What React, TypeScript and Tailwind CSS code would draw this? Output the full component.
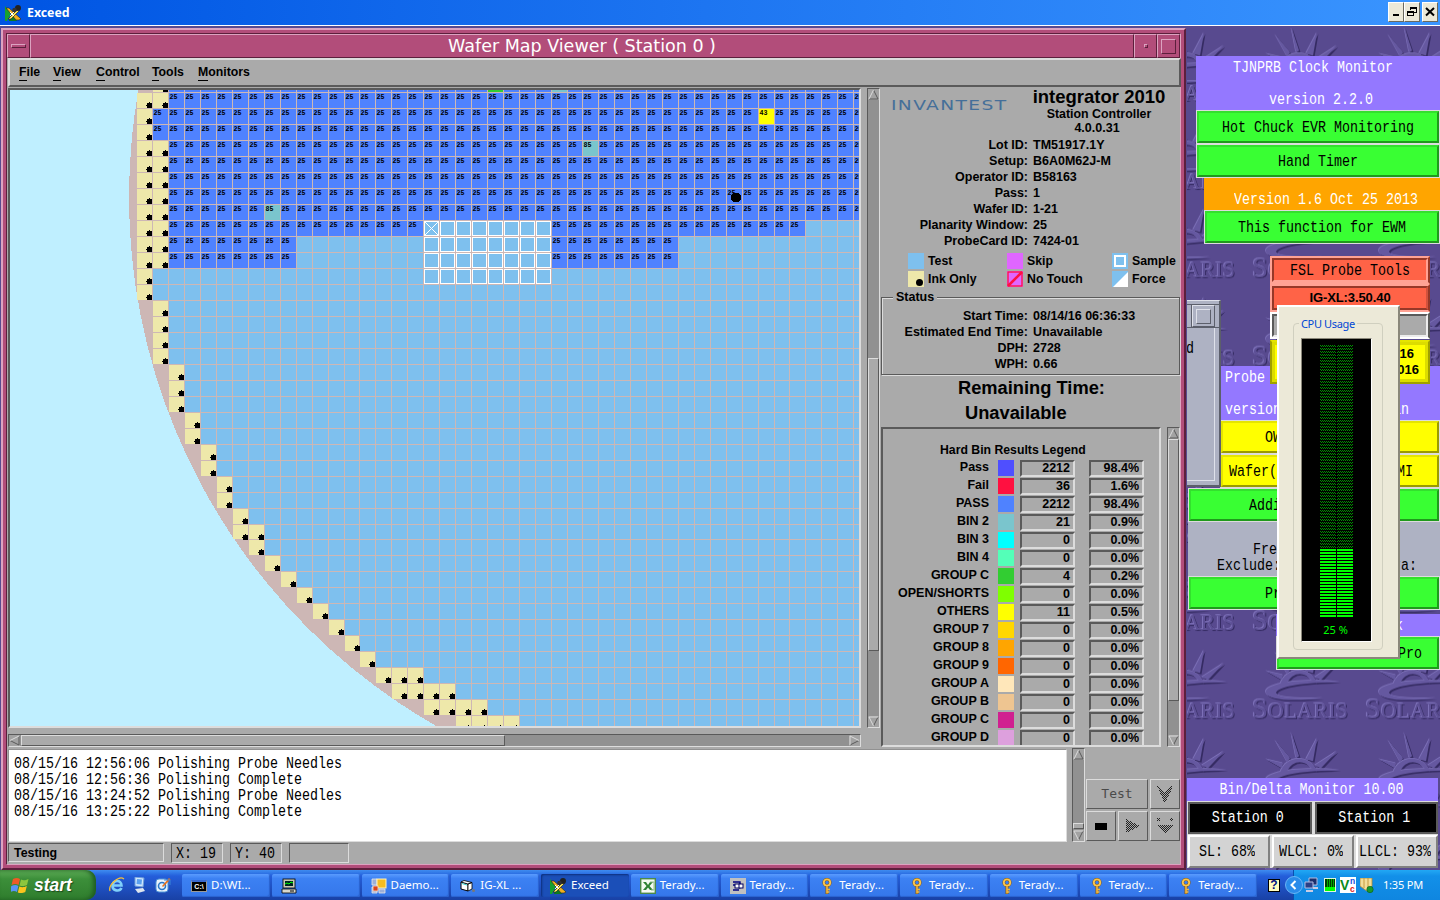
import React from "react";

const MONO =
  "[font-family:'Liberation_Mono',monospace] text-[13.33px] leading-4 whitespace-pre inline-block scale-y-[1.25]";
const BOLD = "[font-family:'Liberation_Sans',Arial,sans-serif] font-bold whitespace-pre";
const TAHOMA = "[font-family:'Noto_Sans',Tahoma,sans-serif] whitespace-pre";
const SUNK = "border-t-[#5a5a5a] border-l-[#5a5a5a] border-r-[#dcdcdc] border-b-[#dcdcdc]";
const RAISED = "border-t-[#dcdcdc] border-l-[#dcdcdc] border-r-[#5a5a5a] border-b-[#5a5a5a]";

/* ---------- Wafer map ---------- */

const colX = (i: number) => 152 + 16 * i - (i >= 13 ? 1 : 0) - (i >= 27 ? 1 : 0) - (i >= 40 ? 1 : 0);
const rowY = (j: number) => 92 + 16 * j - (j >= 28 ? 1 : 0);

const INK: Record<number, [number, number]> = {
  [-1]: [0, 0], 0: [-1, 0], 1: [-1, -1], 2: [-1, -1], 3: [-1, 0], 4: [-1, 0], 5: [-1, 0], 6: [-1, 0],
  7: [-1, 0], 8: [-1, 0], 9: [-1, 0], 10: [-1, 0], 11: [-1, -1], 12: [-1, -1], 13: [0, 0], 14: [0, 0],
  15: [0, 0], 16: [0, 0], 17: [1, 1], 18: [1, 1], 19: [1, 1], 20: [2, 2], 21: [2, 2], 22: [3, 3],
  23: [3, 3], 24: [4, 4], 25: [4, 4], 26: [5, 5], 27: [5, 6], 28: [6, 6], 29: [7, 7], 30: [8, 8],
  31: [9, 9], 32: [10, 10], 33: [11, 11], 34: [12, 12], 35: [13, 13], 36: [14, 16], 37: [15, 18],
  38: [17, 20], 39: [19, 22],
};

const SPECIAL: Record<string, [string, string]> = {
  "-1,21": ["#32cd32", ""],
  "-1,25": ["#7ac5cd", ""],
  "1,38": ["#ffff00", "43"],
  "3,27": ["#7ac5cd", "85"],
  "7,7": ["#7ac5cd", "85"],
};

const isTested = (j: number, i: number) => {
  if (j <= 7) return true;
  if (j === 8) return i <= 16 || (i >= 25 && i <= 40);
  if (j <= 10) return i <= 8 || (i >= 25 && i <= 32);
  return false;
};

function WaferMap() {
  const cells: React.ReactNode[] = [];
  for (let j = -1; j <= 39; j++) {
    const [a, b] = INK[j];
    for (let i = a; i <= 44; i++) {
      const x = colX(i);
      const y = rowY(j);
      const w = colX(i + 1) - x - 1;
      const h = rowY(j + 1) - y - 1;
      const key = `${j},${i}`;
      if (i <= b) {
        cells.push(
          <g key={key}>
            <rect x={x + 1} y={y + 1} width={w} height={h} fill="#eee8aa" />
            <rect x={x + 11} y={y + 11} width="5" height="5" fill="#000" />
            <rect x={x + 10} y={y + 13} width="1" height="1" fill="#000" />
            <rect x={x + 13} y={y + 10} width="1" height="1" fill="#000" />
          </g>
        );
        continue;
      }
      const tested = isTested(j, i);
      const sample = j >= 8 && j <= 11 && i >= 17 && i <= 24;
      const sp = SPECIAL[key];
      cells.push(
        <g key={key}>
          <rect x={x + 1} y={y + 1} width={w} height={h} fill={sp ? sp[0] : tested ? "#4f82ff" : "#7ec0ee"} />
          {sample && <rect x={x + 1.5} y={y + 1.5} width={w - 1} height={h - 1} fill="none" stroke="#fff" />}
          {tested && j >= 0 && (
            <text x={x + 1.6} y={y + 7.4} className="text-[7.5px] font-bold [font-family:'Liberation_Mono',monospace]" textLength="8" lengthAdjust="spacingAndGlyphs">
              {sp ? sp[1] : "25"}
            </text>
          )}
        </g>
      );
    }
  }
  return (
    <svg width="849" height="636" viewBox="10 90 849 636" shapeRendering="crispEdges" className="block bg-[#bfefff]">
      <circle cx="738" cy="197" r="609" fill="#cdb7b5" />
      {cells}
      <path d="M425 222l13 13M438 222l-13 13" stroke="#fff" />
      <circle cx="736" cy="197.5" r="5" fill="#000" />
    </svg>
  );
}

/* ---------- Motif scrollbars ---------- */

function Arrow({ dir }: { dir: "up" | "down" | "left" | "right" }) {
  const d = {
    up: ["M1 10L5.5 1", "M5.5 1L10 10H1"],
    down: ["M10 1H1L5.5 10", "M5.5 10L10 1"],
    left: ["M1 5.5L10 1", "M10 1V10L1 5.5"],
    right: ["M1 10V1L10 5.5", "M10 5.5L1 10"],
  }[dir];
  return (
    <svg width="11" height="11" viewBox="0 0 11 11" fill="none" className="shrink-0 bg-[#a2a2a2]">
      <path d={d[1]} stroke="#5a5a5a" strokeWidth="1" />
      <path d={d[0]} stroke="#dcdcdc" strokeWidth="1" />
    </svg>
  );
}

function VBar({ before, thumb, h }: { before: number; thumb: number; h: string }) {
  return (
    <div className={`flex w-[13px] shrink-0 flex-col border bg-[#919191] ${SUNK} ${h}`}>
      <Arrow dir="up" />
      <div className="shrink-0" style={{ height: before }} />
      <div className={`shrink-0 border bg-[#aaaaaa] ${RAISED}`} style={{ height: thumb }} />
      <div className="grow" />
      <Arrow dir="down" />
    </div>
  );
}

/* ---------- Info panel ---------- */

function InfoRow({ label, value }: { label: string; value: string }) {
  return (
    <div className={`flex h-4 items-center text-[12.5px] leading-4 ${BOLD}`}>
      <span className="w-[147px] text-right">{label}</span>
      <span className="ml-[5px]">{value}</span>
    </div>
  );
}

function Swatch({ kind }: { kind: string }) {
  return (
    <svg width="16" height="16" viewBox="0 0 16 16" className="shrink-0">
      <rect width="16" height="16" fill={kind === "ink" ? "#eee8aa" : kind === "skip" || kind === "notouch" ? "#e066ff" : "#7ec0ee"} />
      {kind === "ink" && <circle cx="11.5" cy="11.5" r="3.5" />}
      {kind === "notouch" && (
        <g stroke="#ff1040" fill="none">
          <rect x="1" y="1" width="14" height="14" strokeWidth="1.3" />
          <path d="M1 15L15 1" strokeWidth="2.6" />
        </g>
      )}
      {kind === "sample" && <rect x="3" y="3" width="10" height="10" fill="none" stroke="#fff" strokeWidth="2" />}
      {kind === "force" && <path d="M16 1V16H1Z" fill="#fff" />}
    </svg>
  );
}

function LegendItem({ kind, text, w }: { kind: string; text: string; w: string }) {
  return (
    <div className={`flex items-center gap-1 ${w}`}>
      <Swatch kind={kind} />
      <span className={`text-[12.3px] leading-4 ${BOLD}`}>{text}</span>
    </div>
  );
}

const BINS: [string, string, string, string][] = [
  ["Pass", "#4f4fff", "2212", "98.4%"],
  ["Fail", "#ff1040", "36", "1.6%"],
  ["PASS", "#4f82ff", "2212", "98.4%"],
  ["BIN 2", "#7ac5cd", "21", "0.9%"],
  ["BIN 3", "#00ffff", "0", "0.0%"],
  ["BIN 4", "#54ffb8", "0", "0.0%"],
  ["GROUP C", "#32cd32", "4", "0.2%"],
  ["OPEN/SHORTS", "#7fff00", "0", "0.0%"],
  ["OTHERS", "#ffff00", "11", "0.5%"],
  ["GROUP 7", "#ffd700", "0", "0.0%"],
  ["GROUP 8", "#ffa500", "0", "0.0%"],
  ["GROUP 9", "#ff6600", "0", "0.0%"],
  ["GROUP A", "#ffe7ba", "0", "0.0%"],
  ["GROUP B", "#eec591", "0", "0.0%"],
  ["GROUP C", "#d02090", "0", "0.0%"],
  ["GROUP D", "#dda0dd", "0", "0.0%"],
];

function RightPanel() {
  return (
    <div className="flex h-[660px] w-[300px] flex-col">
      <div className="flex h-[49px] shrink-0">
        <div className="w-[147px] pt-[10px] pl-[10px]">
          <div className="origin-left scale-x-[1.38] [font-family:'DejaVu_Sans',sans-serif] text-[13.5px] leading-[14px] tracking-[1px] text-[#456f99]">
            INVANTEST
          </div>
        </div>
        <div className={`flex w-[142px] flex-col items-center ${BOLD}`}>
          <div className="text-[18.5px] leading-[18px]">integrator 2010</div>
          <div className="mt-px text-[12.4px] leading-[15px]">Station Controller</div>
          <div className="-ml-1 text-[12.5px] leading-[13px]">4.0.0.31</div>
        </div>
      </div>
      <InfoRow label="Lot ID:" value="TM51917.1Y" />
      <InfoRow label="Setup:" value="B6A0M62J-M" />
      <InfoRow label="Operator ID:" value="B58163" />
      <InfoRow label="Pass:" value="1" />
      <InfoRow label="Wafer ID:" value="1-21" />
      <InfoRow label="Planarity Window:" value="25" />
      <InfoRow label="ProbeCard ID:" value="7424-01" />
      <div className="mt-1 ml-[27px] flex h-4 shrink-0">
        <LegendItem kind="test" text="Test" w="w-[99px]" />
        <LegendItem kind="skip" text="Skip" w="w-[105px]" />
        <LegendItem kind="sample" text="Sample" w="" />
      </div>
      <div className="mt-[2px] ml-[27px] flex h-4 shrink-0">
        <LegendItem kind="ink" text="Ink Only" w="w-[99px]" />
        <LegendItem kind="notouch" text="No Touch" w="w-[105px]" />
        <LegendItem kind="force" text="Force" w="" />
      </div>
      <div className="relative mt-[10px] flex h-[78px] w-[299px] shrink-0 flex-col border border-[#5a5a5a] pt-[10px] shadow-[1px_1px_0_#dcdcdc,inset_1px_1px_0_#dcdcdc]">
        <span className={`absolute -top-[8px] left-[11px] bg-[#aaaaaa] px-[3px] text-[12.5px] leading-[15px] ${BOLD}`}>Status</span>
        <div className="-ml-px">
          <InfoRow label="Start Time:" value="08/14/16 06:36:33" />
          <InfoRow label="Estimated End Time:" value="Unavailable" />
          <InfoRow label="DPH:" value="2728" />
          <InfoRow label="WPH:" value="0.66" />
        </div>
      </div>
      <div className={`shrink-0 pl-[77px] text-[18.3px] leading-[25px] ${BOLD}`}>Remaining Time:</div>
      <div className={`shrink-0 pl-[84px] text-[18.3px] leading-[25px] ${BOLD}`}>Unavailable</div>
      <div className="mt-[2px] flex h-[320px] shrink-0">
        <div className={`mr-[6px] w-[280px] overflow-hidden border-2 ${SUNK}`}>
          <div className={`mt-[12px] pl-[57px] text-[12.25px] leading-[18px] ${BOLD}`}>Hard Bin Results Legend</div>
          {BINS.map(([name, color, n, pct], k) => (
            <div key={k} className={`flex h-[18px] items-center text-[12.5px] leading-[15px] ${BOLD}`}>
              <span className="w-[106px] pb-px text-right">{name}</span>
              <span className="ml-[9px] h-4 w-4" style={{ background: color }} />
              <span className={`ml-[6px] h-[17px] w-[55px] border-2 pr-[3px] text-right leading-[12px] ${SUNK}`}>{n}</span>
              <span className={`ml-[14px] h-[17px] w-[55px] border-2 pr-[3px] text-right leading-[12px] ${SUNK}`}>{pct}</span>
            </div>
          ))}
        </div>
        <VBar before={0} thumb={262} h="h-[320px]" />
      </div>
    </div>
  );
}

/* ---------- Main window ---------- */

function GreyButton({ w, children }: { w: string; children: React.ReactNode }) {
  return <div className={`flex h-[30px] items-center justify-center border ${RAISED} ${w}`}>{children}</div>;
}

function Stipple({ d }: { d: string }) {
  return (
    <svg width="16" height="16" viewBox="0 0 16 16" shapeRendering="crispEdges">
      <defs>
        <pattern id="stip" width="2" height="2" patternUnits="userSpaceOnUse">
          <path d="M0 0h1v1h-1zM1 1h1v1h-1z" fill="#222" />
        </pattern>
      </defs>
      <path d={d} fill="url(#stip)" />
    </svg>
  );
}

const MENUS = [
  ["F", "ile", "w-[34px]"],
  ["V", "iew", "w-[43px]"],
  ["C", "ontrol", "w-[56px]"],
  ["T", "ools", "w-[46px]"],
  ["M", "onitors", ""],
];

function MainWindow() {
  return (
    <div className="absolute top-0 left-px flex h-[842px] w-[1185px] flex-col border-2 border-t-[#dca3c0] border-r-[#5c1f3c] border-b-[#5c1f3c] border-l-[#dca3c0] bg-[#b24d7a] p-[3px]">
      <div className="flex grow flex-col border border-t-[#5c1f3c] border-r-[#dca3c0] border-b-[#dca3c0] border-l-[#5c1f3c]">
        <div className="flex h-[24px] shrink-0">
          <div className="flex w-[23px] items-center justify-center border border-t-[#dca3c0] border-r-[#5c1f3c] border-b-[#5c1f3c] border-l-[#dca3c0]">
            <div className="h-[4px] w-[15px] border border-t-[#dca3c0] border-r-[#5c1f3c] border-b-[#5c1f3c] border-l-[#dca3c0]" />
          </div>
          <div className="flex grow items-center justify-center border border-t-[#dca3c0] border-r-[#5c1f3c] border-b-[#5c1f3c] border-l-[#dca3c0] text-[17.5px] leading-5 whitespace-pre text-white [font-family:'DejaVu_Sans',sans-serif]">
            Wafer Map Viewer ( Station 0 )
          </div>
          <div className="flex w-[23px] items-center justify-center border border-t-[#dca3c0] border-r-[#5c1f3c] border-b-[#5c1f3c] border-l-[#dca3c0]">
            <div className="h-1 w-1 border border-t-[#dca3c0] border-r-[#5c1f3c] border-b-[#5c1f3c] border-l-[#dca3c0]" />
          </div>
          <div className="flex w-[23px] items-center justify-center border border-t-[#dca3c0] border-r-[#5c1f3c] border-b-[#5c1f3c] border-l-[#dca3c0]">
            <div className="h-[15px] w-[15px] border border-t-[#dca3c0] border-r-[#5c1f3c] border-b-[#5c1f3c] border-l-[#dca3c0]" />
          </div>
        </div>
        <div className="flex grow flex-col bg-[#aaaaaa] pl-px">
          <div className={`flex h-[29px] w-[1173px] shrink-0 items-center border-2 pb-[2px] pl-[9px] text-[12.3px] leading-4 ${RAISED} ${BOLD}`}>
            {MENUS.map(([a, b, w]) => (
              <span key={a} className={w}>
                <span className="border-b border-black pb-px">{a}</span>
                {b}
              </span>
            ))}
          </div>
          <div className="flex h-[661px] shrink-0 pt-px">
            <div className="flex w-[873px] shrink-0 flex-col">
              <div className="flex h-[640px]">
                <div className={`h-[640px] w-[853px] shrink-0 border-2 ${SUNK}`}>
                  <WaferMap />
                </div>
                <div className="w-[6px]" />
                <VBar before={258} thumb={293} h="h-[640px]" />
              </div>
              <div className={`mt-[6px] flex h-[13px] w-[853px] border bg-[#919191] ${SUNK}`}>
                <Arrow dir="left" />
                <div className={`ml-px h-[11px] w-[484px] border bg-[#aaaaaa] ${RAISED}`} />
                <div className="grow" />
                <Arrow dir="right" />
              </div>
            </div>
            <RightPanel />
          </div>
          <div className="flex h-[94px] shrink-0">
            <div className="mt-px h-[93px] w-[1059px] border border-t-[#919191] border-r-[#dcdcdc] border-b-[#dcdcdc] border-l-[#919191] bg-white pt-[6px] pl-[5px]">
              {[
                "08/15/16 12:56:06 Polishing Probe Needles",
                "08/15/16 12:56:36 Polishing Complete",
                "08/15/16 13:24:52 Polishing Probe Needles",
                "08/15/16 13:25:22 Polishing Complete",
              ].map((t, k) => (
                <Line key={k} text={t} className="" />
              ))}
            </div>
            <div className="w-[5px]" />
            <VBar before={63} thumb={6} h="h-[94px]" />
            <div className="ml-px flex flex-col gap-[2px] pt-[31px]">
              <div className="flex gap-[2px]">
                <GreyButton w="w-[62px]">
                  <span className="text-[13px] leading-4 text-[#4a4a4a] [font-family:'DejaVu_Sans_Mono',monospace]">Test</span>
                </GreyButton>
                <GreyButton w="w-[30px]">
                  <Stipple d="M0 0h2l3 4 3 2 3-2 3-4h2l-4 9-3 7h-2l-3-7z" />
                </GreyButton>
              </div>
              <div className="flex gap-[2px]">
                <GreyButton w="w-[30px]">
                  <div className="h-[7px] w-3 bg-black" />
                </GreyButton>
                <GreyButton w="w-[30px]">
                  <Stipple d="M1 1l14 7L1 15z" />
                </GreyButton>
                <GreyButton w="w-[30px]">
                  <Stipple d="M0 0h3v3H0zM13 0h3v3h-3zM1 7h15L8 16z" />
                </GreyButton>
              </div>
            </div>
          </div>
          <div className="flex h-[22px] shrink-0 items-start pt-px">
            <div className={`mr-[7px] h-[19px] w-[156px] border pl-[5px] text-[12.4px] leading-[18px] ${SUNK} ${BOLD}`}>Testing</div>
            <div className={`mr-[7px] flex h-[20px] w-[52px] items-center border pt-px pl-1 ${SUNK}`}>
              <span className={MONO}>X: 19</span>
            </div>
            <div className={`mr-[7px] flex h-[20px] w-[52px] items-center border pt-px pl-1 ${SUNK}`}>
              <span className={MONO}>Y: 40</span>
            </div>
            <div className={`h-[20px] w-[60px] border ${SUNK}`} />
          </div>
        </div>
      </div>
    </div>
  );
}

/* ---------- Desktop ---------- */

function Wallpaper() {
  const sun = (
    <>
      <path d="M19 40l-16-9 17 4zM24 34L12 12l15 18zM33 30L28 4l8 24zM43 31L54 10l-4 23zM52 37l22-14-16 17z" />
      <path d="M17 45C22 26 48 26 54 43L48 40C42 31 28 32 24 44Z" />
      <path d="M77 42C40 38 0 43 3 53C5 60 30 62 60 58C30 59 14 57 13 53C14 46 42 42 77 42Z" />
    </>
  );
  const word = (
    <text x="0" y="0" className="[font-family:'Liberation_Serif',serif]" textLength="96" lengthAdjust="spacingAndGlyphs">
      <tspan fontSize="30">S</tspan>
      <tspan fontSize="23">OLARIS</tspan>
    </text>
  );
  return (
    <svg width="1440" height="842" viewBox="0 28 1440 842" className="absolute inset-0">
      <defs>
        <pattern id="sol" x="1250" y="640" width="113" height="88.2" patternUnits="userSpaceOnUse">
          <g transform="translate(13 0)">
            <g fill="#352b63" transform="translate(1.5 1.5)">{sun}</g>
            <g fill="#7c70b8" transform="translate(-.7 -.7)">{sun}</g>
            <g fill="#6558a0">{sun}</g>
          </g>
          <g fill="#352b63" transform="translate(3 79)">{word}</g>
          <g fill="#7c70b8" transform="translate(1 77)">{word}</g>
          <g fill="#5d5096" transform="translate(2 78)">{word}</g>
        </pattern>
      </defs>
      <rect y="28" width="1440" height="842" fill="#584a8f" />
      <rect x="1187" y="28" width="253" height="842" fill="url(#sol)" />
    </svg>
  );
}

const TONES = {
  green: "bg-[#39ff33] border-t-[#33e02e] border-l-[#33e02e] border-r-[#1f9a1c] border-b-[#1f9a1c]",
  yellow: "bg-[#ffff00] border-t-[#e5e500] border-l-[#e5e500] border-r-[#9a9a00] border-b-[#9a9a00]",
};

function Push({ tone, text, className = "justify-center" }: { tone: keyof typeof TONES; text: string; className?: string }) {
  return (
    <div className="h-[34px] shrink-0 border border-[#dcdcdc]">
      <div className={`flex h-full items-center border-2 pt-[2px] ${TONES[tone]} ${className}`}>
        <span className={MONO}>{text}</span>
      </div>
    </div>
  );
}

function Line({ text, className }: { text: string; className: string }) {
  return (
    <div className={`flex h-4 items-center leading-4 ${className}`}>
      <span className={MONO}>{text}</span>
    </div>
  );
}

function CpuMeter() {
  const rows = Array.from({ length: 23 }, (_, k) => k);
  return (
    <div className="absolute top-[277px] left-[1277px] h-[354px] w-[123px] border-2 border-t-white border-r-[#8a877a] border-b-[#8a877a] border-l-white bg-[#ece9d8] p-[14px] pt-4">
      <fieldset className="relative h-[327px] w-[90px] rounded-[4px] border border-[#d0cfbf]">
        <span className={`absolute -top-[8px] left-[5px] bg-[#ece9d8] px-[2px] text-[11px] leading-[15px] tracking-[-0.35px] text-[#0046d5] ${TAHOMA}`}>
          CPU Usage
        </span>
        <div className="mt-[14px] ml-[7px] flex h-[304px] w-[71px] flex-col items-center border border-t-[#8a877a] border-r-white border-b-white border-l-[#8a877a] bg-black">
          <svg width="33" height="274" className="mt-[6px] block" shapeRendering="crispEdges">
            <defs>
              <pattern id="dim" width="2" height="3" patternUnits="userSpaceOnUse">
                <path d="M0 0h1v1h-1zM1 1h1v1h-1z" fill="#009000" />
              </pattern>
            </defs>
            <rect width="16" height="204" fill="url(#dim)" />
            <rect x="17" width="16" height="204" fill="url(#dim)" />
            {rows.map((k) => (
              <path key={k} d={`M0 ${204 + k * 3}h16v2h-16zM17 ${204 + k * 3}h16v2h-16z`} fill="#00ff00" />
            ))}
          </svg>
          <span className={`mt-[3px] -ml-[2px] text-[11px] leading-4 text-[#00ff00] ${TAHOMA}`}>25 %</span>
        </div>
      </fieldset>
    </div>
  );
}

const SALMON = "border-t-[#ffa294] border-r-[#963828] border-b-[#ffa294] border-l-[#ffa294]";

function Widgets() {
  return (
    <>
      <div className="absolute top-[28px] left-[1196px] w-[244px]">
        <div className="h-[54px] bg-[#9478ff] pt-1 text-white">
          <Line text="TJNPRB Clock Monitor" className="pl-[37px]" />
          <Line text="version 2.2.0" className="mt-4 pl-[73px]" />
        </div>
        <Push tone="green" text="Hot Chuck EVR Monitoring" />
        <Push tone="green" text="Hand Timer" />
      </div>
      <div className="absolute top-[150px] left-[1204px] w-[236px]">
        <div className="h-[32px] bg-[#ffa500] pt-[14px] text-white">
          <Line text="Version 1.6 Oct 25 2013" className="pl-[30px]" />
        </div>
        <Push tone="green" text="This function for EWM" />
      </div>

      <div className="absolute top-[338px] left-[1188px] w-[252px]">
        <div className="ml-8">
          <div className="h-[54px] bg-[#9478ff] pt-1 text-white">
            <Line text="Probe" className="pl-[5px]" />
            <Line text="version           Japan" className="mt-4 pl-[5px]" />
          </div>
          <Push tone="yellow" text="OWM Monitor" className="pl-[42px]" />
          <Push tone="yellow" text="Wafer(Station 0) to EMI" className="pl-[6px]" />
        </div>
        <Push tone="green" text="Adding" className="pl-[58px]" />
        <div className="h-[54px] bg-[#aeb2c3] pt-5">
          <Line text="Free" className="pl-[65px]" />
          <Line text="Exclude:           Extra:" className="pl-[29px]" />
        </div>
        <Push tone="green" text="Probe" className="pl-[74px]" />
      </div>
      <div className="absolute top-[586px] left-[1276px] w-[164px]">
        <div className="h-[22px] bg-[#9478ff] pt-1 text-white">
          <Line text="k" className="pl-[119px]" />
        </div>
        <Push tone="green" text="Ambient WaferPro" />
      </div>

      <div className="absolute top-[228px] left-[1270px] flex w-[160px] flex-col">
        <div className={`h-[28px] border-2 ${SALMON}`}>
          <div className="flex h-full items-center justify-center border-2 border-t-[#963828] border-r-[#ffa294] border-b-[#ffa294] border-l-[#963828] bg-[#ff6347] pt-[2px]">
            <span className={MONO}>FSL Probe Tools</span>
          </div>
        </div>
        <div className={`h-[28px] border-2 ${SALMON}`}>
          <div className={`flex h-full items-center justify-center border-2 border-t-[#963828] border-r-[#d2523c] border-b-[#963828] border-l-[#963828] bg-[#ff6347] text-[13px] leading-4 tracking-[-0.1px] ${BOLD}`}>
            IG-XL:3.50.40
          </div>
        </div>
        <div className="h-[27px] border-2 border-t-white border-r-[#5a5a5a] border-b-white border-l-white">
          <div className="h-full border-2 border-t-[#5a5a5a] border-r-[#ececec] border-b-[#ececec] border-l-[#5a5a5a] bg-[#aaaaaa]" />
        </div>
        <div className="mt-px flex h-[44px] flex-col items-end border-2 border-t-[#e5e500] border-r-[#a0a000] border-b-[#a0a000] border-l-[#a0a000]">
          <div className={`h-full w-full border-[3px] border-[#dcdc00] bg-[#ffff00] pt-px text-right text-[13px] leading-4 ${BOLD}`}>
            <div className="pr-[11px]">08/14/16</div>
            <div className="pr-[6px]">08/15/2016</div>
          </div>
        </div>
      </div>

      <div className="absolute top-[272px] left-[1187px] flex h-[187px] w-[34px] flex-col border-r-2 border-b-2 border-t border-t-[#dfe1ea] border-r-[#5c5f6b] border-b-[#5c5f6b] bg-[#aeb2c3] pt-[3px]">
        <div className="flex h-[24px] border-t border-b border-t-[#5c5f6b] border-b-[#5c5f6b]">
          <div className="w-[5px] border-r border-[#5c5f6b]" />
          <div className="flex w-[23px] items-center justify-center border border-t-[#dfe1ea] border-r-[#5c5f6b] border-b-[#5c5f6b] border-l-[#dfe1ea]">
            <div className="h-[15px] w-[15px] border border-t-[#dfe1ea] border-r-[#5c5f6b] border-b-[#5c5f6b] border-l-[#dfe1ea]" />
          </div>
        </div>
        <div className="mr-1 mb-1 flex grow items-start overflow-hidden border-r border-b border-[#dfe1ea] pt-[13px]">
          <span className={`${MONO} -ml-px`}>d</span>
        </div>
      </div>

      <div className="absolute top-[750px] left-[1187px] flex h-[90px] w-[251px] flex-col bg-[#dcdcdc]">
        <div className="flex h-[23px] items-center justify-center bg-[#9478ff] text-white">
          <span className={`${MONO} -ml-[2px]`}>Bin/Delta Monitor 10.00</span>
        </div>
        <div className="flex h-[33px] gap-[3px] pt-px pl-px text-white">
          {["Station 0", "Station 1"].map((t) => (
            <div key={t} className="flex flex-1 items-center justify-center border-2 border-[#5a5a5a] bg-black pr-[4px]">
              <span className={MONO}>{t}</span>
            </div>
          ))}
        </div>
        <div className="flex grow gap-[2px] pt-px pl-px">
          {["SL: 68%", "WLCL: 0%", "LLCL: 93%"].map((t) => (
            <div key={t} className="flex w-[82px] items-center justify-center border-2 border-t-white border-r-[#808080] border-b-[#808080] border-l-white bg-[#d3d3d3] pr-[4px]">
              <span className={MONO}>{t}</span>
            </div>
          ))}
        </div>
      </div>
      <CpuMeter />
    </>
  );
}

/* ---------- Icons ---------- */

function ExceedIcon() {
  return (
    <svg width="17" height="16" viewBox="0 0 17 16">
      <path d="M0 1l6 7-4 8H0z" fill="#17a030" />
      <path d="M4 15l4-4 4 5H4z" fill="#0c7a20" />
      <path d="M1 3h3l12 11-2 1h-3z" fill="#f0b020" stroke="#222" strokeWidth=".6" />
      <path d="M3 14L13 4l2 1L6 14z" fill="#ffe95a" stroke="#222" strokeWidth=".7" />
      <path d="M5 7l4 4M9 7l-4 4" stroke="#fff" />
      <circle cx="13" cy="3" r="3" fill="#222" />
      <circle cx="9.5" cy="5" r="2.3" fill="#333" />
    </svg>
  );
}

function TaskIcon({ kind }: { kind: string }) {
  if (kind === "exceed") return <ExceedIcon />;
  if (kind === "cmd")
    return (
      <div className="flex h-3 w-4 shrink-0 items-end justify-center border border-t-2 border-[#999] border-t-[#3a6ad0] bg-black text-[7px] leading-[9px] font-bold text-white [font-family:'Liberation_Sans',sans-serif]">
        C:\
      </div>
    );
  return (
    <svg width="16" height="16" viewBox="0 0 16 16" className="shrink-0">
      {kind === "pc" && (
        <>
          <rect x="2" y="1" width="12" height="9" fill="#c8c8b8" stroke="#000" strokeWidth=".8" />
          <rect x="4" y="3" width="8" height="5" fill="#022" />
          <path d="M4 6l2-1 2 1 2-2 2 1" stroke="#0f0" fill="none" />
          <path d="M1 11h14v4H1z" fill="#d8d8cc" stroke="#000" strokeWidth=".8" />
          <path d="M9 13h4" stroke="#000" />
        </>
      )}
      {kind === "app" && (
        <>
          <path d="M1 1h5v6H1zM1 9h5v6H1zM8 11h6v4H8z" fill="#9db0d8" stroke="#e8e8e8" strokeWidth=".8" />
          <rect x="6" y="1" width="9" height="9" fill="#f6bd20" stroke="#fff3c0" />
          <rect x="2" y="8" width="5" height="5" fill="#d9441c" stroke="#f8e0d0" strokeWidth=".8" />
        </>
      )}
      {kind === "vb" && (
        <>
          <path d="M1 4l7 2v7l-7-2z" fill="#fff" stroke="#000" />
          <path d="M1 4l3-1.500 8 2L8 6zM8 6l4-1.500V11l-4 2z" fill="#fff" stroke="#000" strokeWidth=".8" />
          <path d="M2 5.500l5 1.500" stroke="#3cc" />
          <circle cx="13.500" cy="12.500" r="1.500" fill="#777" />
        </>
      )}
      {kind === "xls" && (
        <>
          <rect x=".7" y=".7" width="14.6" height="14.6" fill="#f4faf2" stroke="#4c8a47" strokeWidth="1.4" />
          <path d="M3 4h3l2 3 2-3h3l-3.500 4L13 12h-3L8 9.500 6 12H3l3.500-4z" fill="#2e8132" />
          <path d="M10 4h4v8h-3" stroke="#8fba8b" fill="none" />
        </>
      )}
      {kind === "rd" && (
        <>
          <rect width="16" height="16" fill="#c0c0c0" />
          <path d="M3 4h7v3M3 7h4M3 12h6" stroke="#000080" strokeWidth="1.400" fill="none" />
          <rect x="5" y="6" width="5" height="4" fill="#fff" stroke="#000060" />
          <rect x="9" y="6" width="4" height="4" fill="#fff" stroke="#000060" />
        </>
      )}
      {kind === "key" && (
        <>
          <circle cx="8" cy="4.500" r="3.200" fill="none" stroke="#8a5a10" strokeWidth="2.800" />
          <circle cx="8" cy="4.500" r="3.200" fill="none" stroke="#f9c650" strokeWidth="1.800" />
          <path d="M8 8v8" stroke="#8a5a10" strokeWidth="3" />
          <path d="M8 8v7.500M8 11.500h3M8 14h2.500" stroke="#f2b640" strokeWidth="1.600" />
        </>
      )}
    </svg>
  );
}

const TASKS: [string, string][] = [
  ["cmd", "D:\\WI..."],
  ["pc", ""],
  ["app", "Daemo..."],
  ["vb", "IG-XL ..."],
  ["exceed", "Exceed"],
  ["xls", "Terady..."],
  ["rd", "Terady..."],
  ["key", "Terady..."],
  ["key", "Terady..."],
  ["key", "Terady..."],
  ["key", "Terady..."],
  ["key", "Terady..."],
];

function Taskbar() {
  return (
    <div className="flex h-[30px] shrink-0 bg-linear-to-b from-[#3f8cf0] via-[#245edb] via-20% to-[#1941a5]">
      <div className="flex w-[96px] items-center gap-[5px] rounded-r-[10px] bg-linear-to-b from-[#5eac56] via-[#3c8f3a] via-30% to-[#2f7d2d] pl-[11px] shadow-[inset_-3px_0_4px_#1f5c22]">
        <svg width="18" height="17" viewBox="0 0 18 17">
          <path d="M2 2c3-1.500 5-1 7 0L7.500 8c-2-1.200-4-1.200-7 0z" fill="#ee5a26" />
          <path d="M10 2.500c2 1 4 1.200 7.500-.5L16 8c-3 1.500-5 1.300-7.500.5z" fill="#8cc63e" />
          <path d="M.3 9c3-1.200 5-1.200 7 0L6 15c-2-1.200-4-1.200-7 0z" fill="#5a93f5" />
          <path d="M8.300 9.500c2.500 1 4.500 1 7.500-.5L14.300 15c-3 1.500-5 1.300-7.500.5z" fill="#fbc41e" />
        </svg>
        <span className="text-[17.5px] leading-5 font-bold text-white italic [font-family:'Liberation_Sans',sans-serif] [text-shadow:1px_1px_1px_#1a4a1a]">start</span>
      </div>
      <div className="flex w-[86px] items-center gap-[7px] pl-[13px]">
        <svg width="16" height="16" viewBox="0 0 16 16" fill="none">
          <path d="M3.500 8.500h9c0-6-8.500-6-9 .5 0 5 7 6 9 2" stroke="#7fd0fb" strokeWidth="2.600" />
          <path d="M1 14C-1 8 10-2 15 2" stroke="#f5c03a" strokeWidth="1.300" />
        </svg>
        <svg width="16" height="16" viewBox="0 0 16 16">
          <path d="M3 0l9 1-1 9-8-1z" fill="#cfe6ff" stroke="#6f9fd8" />
          <path d="M5 2l5 .5-.5 5-5-.5z" fill="#5aa0ef" />
          <path d="M3 12l8-1 2 3-7 2z" fill="#dfe6ee" />
        </svg>
        <svg width="16" height="16" viewBox="0 0 16 16">
          <rect x="1" y="2" width="12" height="13" rx="3" fill="#e8f3fc" stroke="#4f94d8" />
          <circle cx="7" cy="9" r="3.500" fill="none" stroke="#2a78c8" strokeWidth="1.600" />
          <path d="M7 9l7-8 1.500 1.500L8 10z" fill="#e8731c" />
          <path d="M9 3h6v5" stroke="#3a86d8" fill="none" />
        </svg>
      </div>
      <div className="flex w-[1075px] gap-[2px] py-1 pb-[3px]">
        {TASKS.map(([icon, text], k) => (
          <div
            key={k}
            className={`flex flex-1 items-center gap-1 rounded-[2px] pl-[9px] ${
              icon === "exceed"
                ? "bg-[#1b4fb8] shadow-[inset_1px_1px_2px_#0d2f7c]"
                : "bg-linear-to-b from-[#5a9bff] via-[#3c81f3] via-20% to-[#3577ea] shadow-[inset_-1px_-1px_1px_#2a62cf]"
            }`}
          >
            <TaskIcon kind={icon} />
            <span className={`pb-px text-[11.5px] leading-4 text-white ${TAHOMA}`}>{text}</span>
          </div>
        ))}
      </div>
      <div className="flex w-[36px] items-center pl-[11px]">
        <div className="flex h-[13px] w-[12px] items-center justify-center border border-black bg-[#fffcc0] text-[12px] leading-3 font-bold text-[#001080] [font-family:'Liberation_Sans',sans-serif]">
          ?
        </div>
      </div>
      <div className="relative flex grow items-center border-l border-[#0a4fae] bg-linear-to-b from-[#22a8f4] via-[#1290e9] via-20% to-[#0f86e0] pl-[10px]">
        <svg width="18" height="18" viewBox="0 0 18 18" className="absolute top-[6px] -left-[9px]">
          <circle cx="9" cy="9" r="8.500" fill="#2a8bea" stroke="#7cc4fb" strokeWidth=".8" />
          <path d="M10.500 5L6.500 9l4 4" stroke="#fff" strokeWidth="2" fill="none" />
        </svg>
        <svg width="16" height="16" viewBox="0 0 16 16">
          <path d="M5 1h8v7H5z" fill="#1c2f6c" stroke="#b4bce0" />
          <path d="M1 5h8v6H1z" fill="#2a3f86" stroke="#b4bce0" />
          <path d="M2 13h7v2H2zM9 10h5v2H9z" fill="#c8cde4" />
        </svg>
        <svg width="12" height="14" viewBox="0 0 12 14" className="ml-[4px]" shapeRendering="crispEdges">
          <rect width="12" height="14" fill="#dff5df" />
          <rect x="1" y="1" width="10" height="12" fill="#003a00" />
          <path d="M3 1v8M5 1v8M7 1v8M9 1v8" stroke="#0a0" />
          <rect x="1" y="9" width="10" height="4" fill="#0f0" />
        </svg>
        <div className="ml-[4px] flex h-4 w-4 shrink-0 items-center bg-white font-bold text-[#0a8a1c] [font-family:'Liberation_Sans',sans-serif]">
          <span className="w-[10px] text-[14px] leading-4">V</span>
          <span className="flex w-[6px] flex-col text-[8.5px] leading-[8px]">
            <span className="text-[#2050e0]">n</span>
            <span className="text-[#e02020]">c</span>
          </span>
        </div>
        <svg width="14" height="15" viewBox="0 0 14 15" className="ml-[4px]">
          <path d="M0 0h12v8l-5 5-3-2L0 8z" fill="#f4dd9a" stroke="#b08a30" strokeWidth=".8" />
          <path d="M4 0v10M8 0v10" stroke="#c69b3c" />
          <circle cx="10" cy="11.500" r="3.200" fill="#1b9a2c" stroke="#0c5c18" strokeWidth=".6" />
        </svg>
        <span className={`ml-[9px] text-[11px] leading-4 tracking-[-0.2px] text-white ${TAHOMA}`}>1:35 PM</span>
      </div>
    </div>
  );
}

const CAPTION = "flex h-[20px] w-[16px] items-center justify-center border border-t-white border-r-[#6b6a5e] border-b-[#6b6a5e] border-l-white bg-[#ece9d8]";

export default function App() {
  return (
    <div className="flex h-[900px] w-[1440px] flex-col overflow-hidden bg-[#584a8f] text-black">
      <div className="flex h-[26px] shrink-0 items-center border-b border-white bg-linear-to-r from-[#0054e3] to-[#3a95ff] pl-[5px]">
        <ExceedIcon />
        <span className="ml-[5px] grow text-[12.3px] leading-4 font-bold text-white [font-family:'Noto_Sans',Tahoma,sans-serif]">Exceed</span>
        <div className="flex pr-[2px] pb-px">
          <div className={CAPTION}>
            <svg width="10" height="10" viewBox="0 0 10 10"><path d="M2 7h6v2H2z" /></svg>
          </div>
          <div className={CAPTION}>
            <svg width="10" height="10" viewBox="0 0 10 10" fill="none" stroke="#000" shapeRendering="crispEdges">
              <path d="M3.500 3V.5h6v5H7M3 1.500h6M.5 4.500h6v4h-6zM0 5.500h7" />
            </svg>
          </div>
          <div className={`${CAPTION} ml-[2px]`}>
            <svg width="10" height="10" viewBox="0 0 10 10" stroke="#000" strokeWidth="2"><path d="M1 1l8 7.500M9 1L1 8.500" /></svg>
          </div>
        </div>
      </div>
      <div className="h-[2px] shrink-0" />
      <div className="relative h-[842px] shrink-0 overflow-hidden">
        <Wallpaper />
        <Widgets />
        <MainWindow />
      </div>
      <Taskbar />
    </div>
  );
}
